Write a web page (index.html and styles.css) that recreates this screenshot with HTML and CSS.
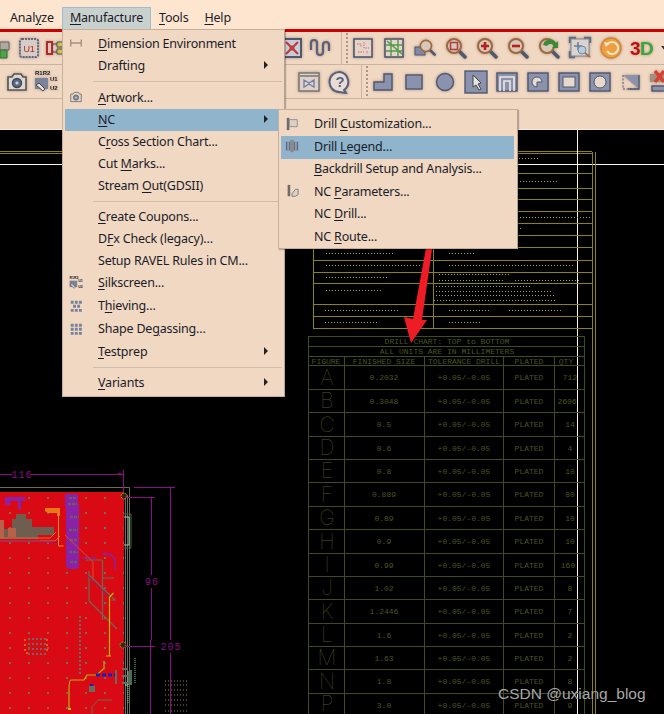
FILE: index.html
```html
<!DOCTYPE html>
<html lang="en">
  <head>
    <meta charset="UTF-8" />
    <title>Manufacture menu</title>
    <link rel="stylesheet" href="styles.css">
  </head>
  <body>
    <svg class="defs" width="0" height="0">
      <symbol id="lens" viewBox="0 0 24 24">
        <path d="M15 15l6 6" stroke="#50586e" stroke-width="3.5" stroke-linecap="round"/>
        <circle cx="10" cy="10" r="7" fill="#d8c8bc" stroke="#a0683c" stroke-width="2"/>
      </symbol>
      <symbol id="camera" viewBox="0 0 24 24">
        <path d="M3 7h4l2-3h7l2 3h3v13H3z" fill="#dcd8d4" stroke="#555" stroke-width="1.6"/>
        <circle cx="12" cy="13" r="4.5" fill="#5a6a8c" stroke="#444" stroke-width="1.4"/>
        <circle cx="12" cy="13" r="1.6" fill="#c8d0e0"/>
      </symbol>
      <symbol id="grid" viewBox="0 0 24 24">
        <path d="M3 3h5v5H3zM10 3h5v5h-5zM17 3h5v5h-5zM3 10h5v5H3zM10 10h5v5h-5zM17 10h5v5h-5zM3 17h5v5H3zM10 17h5v5h-5zM17 17h5v5h-5z" fill="#7a829c"/>
      </symbol>
    </svg>

    <div class="menubar">
      <span class="menubar-item">Anal<u>y</u>ze</span>
      <span class="menubar-item active"><u>M</u>anufacture</span>
      <span class="menubar-item"><u>T</u>ools</span>
      <span class="menubar-item"><u>H</u>elp</span>
    </div>

    <div class="toolbar toolbar-one">
      <div class="tool tool-cut">
        <svg viewBox="0 0 10 24"><path d="M0 6h9v8H0z" fill="#b0a89c" stroke="#666"/><path d="M0 14h7v8H0z" fill="#4fa24a" stroke="#3c6a3a"/></svg>
      </div>
      <div class="tool tool-tight">
        <svg viewBox="0 0 24 24"><rect x="3" y="3" width="18" height="18" rx="2" fill="#d8ccc4" stroke="#5e6684" stroke-width="2" stroke-dasharray="2 1"/><text x="12" y="15.5" class="icon-label red">U1</text></svg>
      </div>
      <div class="tool">
        <svg viewBox="0 0 24 24"><path d="M4 6h5v12H4z" fill="#d8c8bc" stroke="#b02a2a" stroke-width="2"/><path d="M14 6h6v5h-6zM14 13h6v5h-6z" fill="#d0c050" stroke="#555"/><path d="M9 8h5M9 16h5" stroke="#444"/></svg>
      </div>
      <div class="tool-gap-one"></div>
      <div class="tool tool-xbox">
        <svg viewBox="0 0 24 24"><rect x="3" y="3" width="18" height="18" fill="#c8ccd8" stroke="#50586e" stroke-width="2"/><path d="M6 6l12 12M18 6L6 18" stroke="#c04040" stroke-width="2.4"/><circle cx="12" cy="12" r="2.5" fill="#c04040"/></svg>
      </div>
      <div class="tool">
        <svg viewBox="0 0 24 24"><path d="M3 14V7a3 3 0 0 1 6 0v9a3 3 0 0 0 6 0V9a3 3 0 0 1 6 0v6" fill="none" stroke="#5a6078" stroke-width="2.2"/></svg>
      </div>
      <div class="tool-sep"></div>
      <div class="tool">
        <svg viewBox="0 0 24 24"><rect x="3" y="3" width="18" height="18" fill="#e6d4c8" stroke="#50586e" stroke-width="1.6"/><path d="M6 8h4v3M13 6v6h5M7 16h6M16 15v3" fill="none" stroke="#c07070" stroke-dasharray="1.5 1"/></svg>
      </div>
      <div class="tool">
        <svg viewBox="0 0 24 24"><rect x="3" y="3" width="18" height="18" fill="#e6d4c8" stroke="#50586e" stroke-width="1.6"/><path d="M4 9h16M4 15h16M9 4v16M16 4v16M5 5l15 13" stroke="#4f9a48" stroke-width="1.4"/></svg>
      </div>
      <div class="tool">
        <svg viewBox="0 0 24 24"><rect x="2" y="11" width="10" height="8" fill="#8088a6" stroke="#50586e"/><use href="#lens" x="5" y="2" width="19" height="19"/></svg>
      </div>
      <div class="tool">
        <svg viewBox="0 0 24 24"><use href="#lens"/><rect x="6.5" y="6.5" width="7" height="7" fill="none" stroke="#b04040" stroke-width="1.6"/></svg>
      </div>
      <div class="tool">
        <svg viewBox="0 0 24 24"><use href="#lens"/><path d="M10 6v8M6 10h8" stroke="#b82020" stroke-width="2.6"/></svg>
      </div>
      <div class="tool">
        <svg viewBox="0 0 24 24"><use href="#lens"/><path d="M6 10h8" stroke="#b82020" stroke-width="2.6"/></svg>
      </div>
      <div class="tool">
        <svg viewBox="0 0 24 24"><use href="#lens"/><path d="M6 9a7 7 0 0 1 13-2l2-2v7h-6l2-2a4 4 0 0 0-7 0z" fill="#3a8a38"/></svg>
      </div>
      <div class="tool">
        <svg viewBox="0 0 24 24"><path d="M2 7V2h6M16 2h6v5M2 15v6h5" fill="none" stroke="#5e6c84" stroke-width="2.4"/><rect x="3" y="3" width="18" height="17" fill="#dcd4cc" stroke="#7c8698" stroke-width="1"/><path d="M10 6v8M6 10h8" stroke="#6c7c94" stroke-width="1.6"/><circle cx="14" cy="14" r="4" fill="#b8ccdc" stroke="#6888a8"/><path d="M17 17l5 4" stroke="#b0703a" stroke-width="2"/></svg>
      </div>
      <div class="tool">
        <svg viewBox="0 0 24 24"><circle cx="12" cy="12" r="10" fill="#eea040" stroke="#d88430" stroke-width="1.4"/><path d="M8 9a6 6 0 1 1 0 6" fill="none" stroke="#fbe8c8" stroke-width="2"/><path d="M5 6l5 1-3 4z" fill="#fbe8c8"/></svg>
      </div>
      <div class="tool">
        <svg viewBox="0 0 24 24"><text x="0" y="19" class="icon-3d red-3d">3</text><text x="10" y="19" class="icon-3d green-3d">D</text></svg>
      </div>
      <div class="tool-more"></div>
    </div>

    <div class="toolbar toolbar-two">
      <div class="tool tool-camera">
        <svg viewBox="0 0 24 24"><use href="#camera"/></svg>
      </div>
      <div class="tool">
        <svg viewBox="0 0 24 24"><rect x="1" y="8" width="13" height="11" fill="#7a829c"/><path d="M2 15l7 6 2-2-6-6z" fill="#e8e0d8" stroke="#444"/><text x="1" y="5" class="icon-tiny">R1R2</text><text x="16" y="11" class="icon-tiny">U1</text><text x="16" y="20" class="icon-tiny">U2</text></svg>
      </div>
      <div class="tool-gap-two"></div>
      <div class="tool">
        <svg viewBox="0 0 24 24"><rect x="2" y="3" width="20" height="18" fill="#e0d0c6" stroke="#7a7a7a" stroke-width="1.6"/><path d="M2 6h20" stroke="#8c8c8c" stroke-width="2"/><path d="M7 10l5 3 5-3v7l-5-3-5 3z" fill="none" stroke="#7080a8" stroke-width="1.3"/></svg>
      </div>
      <div class="tool">
        <svg viewBox="0 0 24 24"><path d="M12 2a10 10 0 0 0-1 20l7 1-2-3a10 10 0 0 0-4-18z" fill="#e8ddd4" stroke="#58607a" stroke-width="2"/><text x="12" y="17" class="icon-help">?</text></svg>
      </div>
      <div class="tool-sep"></div>
      <div class="tool">
        <svg viewBox="0 0 24 24"><path d="M13 4h8v16H3v-8h10z" class="shape"/></svg>
      </div>
      <div class="tool">
        <svg viewBox="0 0 24 24"><rect x="4" y="5" width="16" height="14" class="shape"/></svg>
      </div>
      <div class="tool">
        <svg viewBox="0 0 24 24"><circle cx="12" cy="12" r="8.5" class="shape"/></svg>
      </div>
      <div class="tool pressed">
        <svg viewBox="0 0 24 24"><rect x="1" y="1" width="22" height="22" class="shape"/><path d="M9 5l8 8-3 1 3 5-2 1-3-5-3 2z" fill="#e8e4e0" stroke="#444"/></svg>
      </div>
      <div class="tool">
        <svg viewBox="0 0 24 24"><rect x="2" y="3" width="20" height="18" class="shape"/><path d="M5 21V7h14v14M9 21V11h6v10" fill="none" stroke="#f0e8e0" stroke-width="1.6"/></svg>
      </div>
      <div class="tool">
        <svg viewBox="0 0 24 24"><rect x="2" y="3" width="20" height="18" class="shape"/><path d="M11 17a5 5 0 1 1 5-5h-5z" fill="#e8dcd0" stroke="#50586e"/></svg>
      </div>
      <div class="tool">
        <svg viewBox="0 0 24 24"><rect x="2" y="3" width="20" height="18" class="shape"/><rect x="6" y="7" width="12" height="10" fill="#e8d8ca" stroke="#50586e"/></svg>
      </div>
      <div class="tool">
        <svg viewBox="0 0 24 24"><rect x="2" y="3" width="20" height="18" class="shape"/><circle cx="12" cy="12" r="6" fill="#e8d8ca" stroke="#50586e"/></svg>
      </div>
      <div class="tool">
        <svg viewBox="0 0 24 24"><path d="M4 5h16v14z" fill="#8a92ae"/><path d="M20 5v14H9" fill="none" stroke="#50586e" stroke-width="1.4"/><path d="M4 5v14h16" fill="none" stroke="#50586e" stroke-dasharray="2 1.5"/></svg>
      </div>
      <div class="tool tool-last">
        <svg viewBox="0 0 14 24"><path d="M0 4h14v8H0z" fill="#a09084"/><path d="M5 1l9 11M14 1L5 12" stroke="#d84030" stroke-width="3.4"/><rect x="2" y="16" width="14" height="5" class="shape"/></svg>
      </div>
    </div>

    <div class="strip"></div>

    <div class="canvas">
      <svg class="board" viewBox="0 130 664 584" width="664" height="584">
        <!-- outline lines -->
        <path d="M0 151.5H592M0 153.5H592" class="outline"/>
        <path d="M0 164.5H664" class="white"/>
        <path d="M577.5 130V714" class="white"/>
        <path d="M592.5 152V714M595.5 152V714" class="outline"/>

        <!-- notes block above the chart -->
        <path d="M313.5 153V328M433.5 153V328M313 173.5H592M313 188.5H592M313 199.5H592M313 211.5H592M313 223.5H592M313 235.5H592M313 247.5H592M313 260.5H592M313 272.5H592M313 283.5H592M313 304.5H592M313 316.5H592M313 328.5H592" class="outline"/>
        <path d="M519 158.5H540M520 181.5H558M520 217.5H590M520 228.5H522M326 253.5H395M449 253.5H474M326 265.5H420M449 265.5H574M439 274.5H510M326 277.5H387M439 280.5H505M515 280.5H580M326 290.5H383M436 286.5H530M436 291.5H552M436 295.5H555M434 300.5H557M325 310.5H399M449 310.5H490M509 310.5H562M325 322.5H379M449 322.5H482" class="note"/>

        <!-- drill chart -->
        <path d="M308.5 336.5H584.5V714M308.5 336V714M308 346.5H585M308 356.5H585M308 365.5H585M308 389.5H585M308 412.5H585M308 436.5H585M308 459.5H585M308 482.5H585M308 506.5H585M308 529.5H585M308 553.5H585M308 576.5H585M308 599.5H585M308 623.5H585M308 646.5H585M308 669.5H585M308 693.5H585M344.5 356V714M424.5 356V714M503.5 356V714M554.5 356V714" class="chart"/>
        <text x="447" y="344" class="chart-text">DRILL CHART: TOP to BOTTOM</text>
        <text x="447" y="354" class="chart-text">ALL UNITS ARE IN MILLIMETERS</text>
        <text x="326" y="363.500" class="chart-text">FIGURE</text>
        <text x="384" y="363.500" class="chart-text">FINISHED SIZE</text>
        <text x="464" y="363.500" class="chart-text">TOLERANCE DRILL</text>
        <text x="529" y="363.500" class="chart-text">PLATED</text>
        <text x="566" y="363.500" class="chart-text">QTY</text>

        <text x="327" y="385" class="figure">A</text><text x="384" y="380" class="chart-text">0.2032</text><text x="464" y="380" class="chart-text">+0.05/-0.05</text><text x="529" y="380" class="chart-text">PLATED</text><text x="570" y="380" class="chart-text">712</text>
        <text x="327" y="408" class="figure">B</text><text x="384" y="404" class="chart-text">0.3048</text><text x="464" y="404" class="chart-text">+0.05/-0.05</text><text x="529" y="404" class="chart-text">PLATED</text><text x="567" y="404" class="chart-text">2606</text>
        <text x="327" y="432" class="figure">C</text><text x="384" y="427" class="chart-text">0.5</text><text x="464" y="427" class="chart-text">+0.05/-0.05</text><text x="529" y="427" class="chart-text">PLATED</text><text x="570" y="427" class="chart-text">14</text>
        <text x="327" y="455" class="figure">D</text><text x="384" y="451" class="chart-text">0.6</text><text x="464" y="451" class="chart-text">+0.05/-0.05</text><text x="529" y="451" class="chart-text">PLATED</text><text x="570" y="451" class="chart-text">4</text>
        <text x="327" y="478" class="figure">E</text><text x="384" y="474" class="chart-text">0.8</text><text x="464" y="474" class="chart-text">+0.05/-0.05</text><text x="529" y="474" class="chart-text">PLATED</text><text x="570" y="474" class="chart-text">10</text>
        <text x="327" y="502" class="figure">F</text><text x="384" y="497" class="chart-text">0.889</text><text x="464" y="497" class="chart-text">+0.05/-0.05</text><text x="529" y="497" class="chart-text">PLATED</text><text x="570" y="497" class="chart-text">80</text>
        <text x="327" y="525" class="figure">G</text><text x="384" y="521" class="chart-text">0.89</text><text x="464" y="521" class="chart-text">+0.05/-0.05</text><text x="529" y="521" class="chart-text">PLATED</text><text x="570" y="521" class="chart-text">10</text>
        <text x="327" y="549" class="figure">H</text><text x="384" y="544" class="chart-text">0.9</text><text x="464" y="544" class="chart-text">+0.05/-0.05</text><text x="529" y="544" class="chart-text">PLATED</text><text x="570" y="544" class="chart-text">10</text>
        <text x="327" y="572" class="figure">I</text><text x="384" y="568" class="chart-text">0.99</text><text x="464" y="568" class="chart-text">+0.05/-0.05</text><text x="529" y="568" class="chart-text">PLATED</text><text x="568" y="568" class="chart-text">160</text>
        <text x="327" y="595" class="figure">J</text><text x="384" y="591" class="chart-text">1.02</text><text x="464" y="591" class="chart-text">+0.05/-0.05</text><text x="529" y="591" class="chart-text">PLATED</text><text x="570" y="591" class="chart-text">8</text>
        <text x="327" y="619" class="figure">K</text><text x="384" y="614" class="chart-text">1.2446</text><text x="464" y="614" class="chart-text">+0.05/-0.05</text><text x="529" y="614" class="chart-text">PLATED</text><text x="570" y="614" class="chart-text">7</text>
        <text x="327" y="642" class="figure">L</text><text x="384" y="638" class="chart-text">1.6</text><text x="464" y="638" class="chart-text">+0.05/-0.05</text><text x="529" y="638" class="chart-text">PLATED</text><text x="570" y="638" class="chart-text">2</text>
        <text x="327" y="665" class="figure">M</text><text x="384" y="661" class="chart-text">1.63</text><text x="464" y="661" class="chart-text">+0.05/-0.05</text><text x="529" y="661" class="chart-text">PLATED</text><text x="570" y="661" class="chart-text">2</text>
        <text x="327" y="689" class="figure">N</text><text x="384" y="684" class="chart-text">1.8</text><text x="464" y="684" class="chart-text">+0.05/-0.05</text><text x="529" y="684" class="chart-text">PLATED</text><text x="570" y="684" class="chart-text">8</text>
        <text x="327" y="711" class="figure">P</text><text x="384" y="708" class="chart-text">3.0</text><text x="464" y="708" class="chart-text">+0.05/-0.05</text><text x="529" y="708" class="chart-text">PLATED</text><text x="570" y="708" class="chart-text">9</text>

        <!-- board -->
        <defs>
          <pattern id="vias" width="19" height="15" patternUnits="userSpaceOnUse" x="9" y="497">
            <rect width="2" height="2" fill="#7c6a58"/>
          </pattern>
        </defs>
        <rect x="0" y="492" width="124" height="222" fill="#d90a14"/>
        <rect x="0" y="492" width="124" height="222" fill="url(#vias)"/>
        <path d="M0 661H124" stroke="#c81018"/>
        <path d="M0 487.5H129.5V714M125.5 495V714M127.5 495V714" fill="none" stroke="#706a58"/>
        <path d="M124 514h7v34h-7" fill="none" stroke="#5a5a40"/>
        <path d="M124 517h5v28h-5M128 671v14h-3M131 670v15" fill="none" stroke="#88d8b0"/>
        <path d="M135 658v26M128 684v20" fill="none" stroke="#70c8b0" stroke-dasharray="1 1"/>

        <path d="M12 519h4v-5h10v5h6v8h22v8H38v4H0v-10h12z" fill="#6e5e50"/>
        <path d="M0 520h4v18H0zM8 528h8v9H8z" fill="#b86048"/>
        <path d="M0 538H50l6-6M0 541H55l5-5" fill="none" stroke="#d86a30"/>
        <path d="M0 541H40M40 542H60" fill="none" stroke="#8b1a80"/>

        <path d="M5 497h20v4h-4v8h-3v-8H10v4H5z" fill="#8a22a8"/>
        <path d="M65 494h13v10h1v62c0 3-2 3-5 3h-4c-2 0-4-2-4-4V508l-1-2z" fill="#8a22a8"/>
        <path d="M69 498h7M68 504h9M70 517h9M69 530h9M70 540h8M69 552h9M70 562h8" stroke="#6e5a70" stroke-width="2.400" stroke-dasharray="3 1"/>
        <path d="M82 558h14M102 554h8l5 5v11" fill="none" stroke="#8a22a8" stroke-width="1.4"/>
        <path d="M45 508h15v8h-3v-3H48l-3-2z" fill="#e87818"/>
        <path d="M58.500 516v30h5" fill="none" stroke="#e89018"/>
        <path d="M65 535l28 27v18" fill="none" stroke="#e84820"/>
        <path d="M86 560h16M102.500 560v60M102 578h12M89 571v30l28 28M89 575l26 25h-4" fill="none" stroke="#6e6a52" stroke-width="1.2"/>
        <path d="M87 575l22 22" fill="none" stroke="#8b1a80"/>
        <path d="M109.500 656V597l4-4M106 656h5" fill="none" stroke="#c8b400" stroke-width="1.2"/>
        <path d="M69 690c0-2 0-10 2-10h13l3-5h10l6-6h1v-8M69 690v19" fill="none" stroke="#b8b010" stroke-width="1.2"/>
        <rect x="68" y="708" width="3" height="2" fill="#c8b400"/>
        <path d="M96 675h19" stroke="#1020c8" stroke-width="3" stroke-dasharray="4 2"/>
        <rect x="89" y="686" width="6" height="6" fill="#6a6a60"/>
        <rect x="90" y="684" width="3" height="2" fill="#1020c8"/>
        <path d="M116 670v14M122 669h6M122 676h6M122 683h6" stroke="#6a6a60" stroke-width="2"/>
        <path d="M80 616v60" stroke="#6a6a60" stroke-width="2" stroke-dasharray="2 2"/>
        <path d="M28 639H46M28 644H46M28 649H46M28 654H46" fill="none" stroke="#6a6a60" stroke-width="2" stroke-dasharray="2 2"/>
        <path d="M25 639v14h3M47 639v14" fill="none" stroke="#e87818" stroke-width="1.500" stroke-dasharray="2 3"/>
        <path d="M98 700h14M98 700l-6 7v7" fill="none" stroke="#6e6a52"/>
        <circle cx="124" cy="496" r="3" fill="#302818" stroke="#c89000" stroke-dasharray="2 1"/>
        <circle cx="123" cy="645" r="3" fill="#302818" stroke="#c89000" stroke-dasharray="2 1"/>

        <!-- dimensions -->
        <path d="M0 474.500H12M31 474.500H123M123.500 470V492M118 473l5 1.500M134 487.500H175M170.500 488V640M170.500 653V714M125 497.500H155M151.500 498V575M151.500 588V640M125 646.500H155M150.500 640V714" class="dim"/>
        <text x="22" y="478" class="dim-text">116</text>
        <text x="152" y="585" class="dim-text">96</text>
        <text x="171" y="650" class="dim-text">205</text>

        <!-- dot field by the board edge -->
        <path d="M165 681H187M165 685H187M165 690H188M165 695H188M165 700H188M165 705H188M165 711H188" class="field"/>

        <!-- red arrow -->
        <path d="M435 199L439 200L422 320L427 320L411 343L404 317L413 319Z" fill="#ee1c25"/>
      </svg>
    </div>

    <div class="menu">
      <div class="item"><span class="item-icon"><svg viewBox="0 0 16 16"><path d="M2 4v8M14 4v8M2 8h12" stroke="#b08c88" stroke-width="1.6"/></svg></span><span><u>D</u>imension Environment</span></div>
      <div class="item"><span class="item-icon"></span><span>Draftin<u>g</u></span><span class="arrow"></span></div>
      <div class="sep sep-first"></div>
      <div class="item"><span class="item-icon"><svg viewBox="0 0 24 24" class="dim-icon"><use href="#camera"/></svg></span><span><u>A</u>rtwork...</span></div>
      <div class="item selected"><span class="item-icon"></span><span><u>N</u>C</span><span class="arrow"></span></div>
      <div class="item"><span class="item-icon"></span><span>C<u>r</u>oss Section Chart...</span></div>
      <div class="item"><span class="item-icon"></span><span>Cut <u>M</u>arks...</span></div>
      <div class="item"><span class="item-icon"></span><span>Stream <u>O</u>ut(GDSII)</span></div>
      <div class="sep"></div>
      <div class="item"><span class="item-icon"></span><span><u>C</u>reate Coupons...</span></div>
      <div class="item"><span class="item-icon"></span><span>D<u>F</u>x Check (legacy)...</span></div>
      <div class="item"><span class="item-icon"></span><span>Setup RAVEL Rules in CM...</span></div>
      <div class="item tall"><span class="item-icon"><svg viewBox="0 0 24 24"><rect x="1" y="8" width="13" height="11" fill="#7a829c"/><path d="M2 15l7 6 2-2-6-6z" fill="#e8e0d8" stroke="#444"/><text x="1" y="5" class="icon-tiny">R1R2</text><text x="16" y="11" class="icon-tiny">U1</text><text x="16" y="20" class="icon-tiny">U2</text></svg></span><span><u>S</u>ilkscreen...</span></div>
      <div class="item tall"><span class="item-icon"><svg viewBox="0 0 24 24"><path d="M3 3h5v5H3zM10 3h5v5h-5zM17 3h5v5h-5zM7 10h5v5H7zM14 10h5v5h-5zM3 17h5v5H3zM10 17h5v5h-5zM17 17h5v5h-5z" fill="#7a829c"/></svg></span><span>T<u>h</u>ieving...</span></div>
      <div class="item tall"><span class="item-icon"><svg viewBox="0 0 24 24"><use href="#grid"/></svg></span><span>Shape De<u>g</u>assing...</span></div>
      <div class="item"><span class="item-icon"></span><span><u>T</u>estprep</span><span class="arrow"></span></div>
      <div class="sep"></div>
      <div class="item"><span class="item-icon"></span><span><u>V</u>ariants</span><span class="arrow"></span></div>
    </div>

    <div class="submenu">
      <div class="item"><span class="item-icon"><svg viewBox="0 0 16 16"><path d="M2 1h3v14H2z" fill="#6c6c68"/><path d="M5 3h9v8H5z" fill="#ddd0c4" stroke="#8c8c88"/></svg></span><span>Drill <u>C</u>ustomization...</span></div>
      <div class="item selected"><span class="item-icon"><svg viewBox="0 0 16 16"><path d="M1 3h5v10H1zM10 3h5v10h-5z" fill="#5c6c88"/><path d="M6 1h4v14H6z" fill="#8a8a88"/><path d="M3.500 3v10M12.500 3v10" stroke="#c8d0d8"/></svg></span><span>Drill <u>L</u>egend...</span></div>
      <div class="item"><span class="item-icon"></span><span><u>B</u>ackdrill Setup and Analysis...</span></div>
      <div class="item"><span class="item-icon"><svg viewBox="0 0 16 16"><path d="M3 1h3v13H3z" fill="#6c6c68"/><path d="M8 11l4-5h3v6l-3 2H8z" fill="#ddd0c4" stroke="#777"/></svg></span><span>NC <u>P</u>arameters...</span></div>
      <div class="item"><span class="item-icon"></span><span>NC <u>D</u>rill...</span></div>
      <div class="item"><span class="item-icon"></span><span>NC <u>R</u>oute...</span></div>
    </div>

    <div class="watermark">CSDN @uxiang_blog</div>
  </body>
</html>
```
FILE: styles.css
```css
body {
  margin: 0;
  width: 664px;
  height: 714px;
  overflow: hidden;
  position: relative;
  background-color: #000;
  font-family: "Noto Sans", "Open Sans", sans-serif;
  font-size: 12.500px;
  letter-spacing: -0.2px;
  color: #1c1c28;
}
.defs {
  position: absolute;
}
u {
  text-underline-offset: 2px;
}

/* menu bar */
.menubar {
  height: 29px;
  box-sizing: border-box;
  padding: 7px 0 0 0;
  display: flex;
  background-color: #fde5d0;
}
.menubar-item {
  height: 22px;
  line-height: 21px;
  box-sizing: border-box;
  padding: 0 8px;
}
.menubar-item:first-child {
  padding: 0 8px 0 10px;
}
.menubar-item.active {
  background-color: #c9d1cf;
  border: 1px solid #9dbdd0;
  border-bottom: 0;
  line-height: 20px;
  padding: 0 7px;
}

/* toolbars */
.toolbar {
  display: flex;
  align-items: center;
  background-color: #f0d8c3;
  border-bottom: 1px solid #c9b3a1;
  box-sizing: border-box;
  overflow: hidden;
}
.toolbar-one {
  height: 36px;
  border-top: 3px solid #d00000;
}
.toolbar-two {
  height: 34px;
  padding-left: 5px;
}
.tool {
  width: 24px;
  height: 24px;
  flex: none;
  margin-right: 7px;
  filter: drop-shadow(0 0 1.5px #a89080);
}
.tool svg {
  display: block;
  width: 100%;
  height: 24px;
}
.tool.pressed {
  filter: none;
}
.tool-cut {
  width: 10px;
}
.tool-camera {
  margin-right: 5px;
}
.tool-tight {
  margin-right: 2px;
}
.tool-xbox {
  margin-right: 4px;
}
.tool-last {
  width: 14px;
  margin-right: 0;
}
.tool-gap-one {
  width: 206px;
  flex: none;
}
.tool-gap-two {
  width: 232px;
  flex: none;
}
.tool-sep {
  flex: none;
  align-self: stretch;
  width: 9px;
  margin: 0 0 0 2px;
  border-left: 1px solid #c9b3a1;
  background-image: radial-gradient(circle, #a89888 1px, transparent 1px);
  background-size: 4px 4px;
  background-repeat: repeat-y;
  background-position: 3px 4px;
}
.tool-more {
  width: 0;
  height: 0;
  border-left: 4px solid transparent;
  border-top: 5px solid #333;
}
.strip {
  height: 31px;
  box-sizing: border-box;
  background-color: #f0d8c3;
  border-bottom: 1px solid #fbeadb;
}
.shape {
  fill: #8a92ae;
  stroke: #50586e;
  stroke-width: 1.4;
}

/* icon text */
.icon-label {
  font-family: "Liberation Sans", sans-serif;
  font-size: 9px;
  text-anchor: middle;
}
.red {
  fill: #b02a2a;
}
.icon-tiny {
  font-family: "Liberation Sans", sans-serif;
  font-size: 6px;
  font-weight: bold;
  letter-spacing: 0;
  fill: #222;
}
.icon-3d {
  font-family: "Liberation Sans", sans-serif;
  font-size: 19px;
  font-weight: bold;
  letter-spacing: 0;
}
.red-3d {
  fill: #c40a0a;
}
.green-3d {
  fill: #38a838;
}
.icon-help {
  font-family: "Liberation Sans", sans-serif;
  font-size: 15px;
  font-weight: bold;
  text-anchor: middle;
  fill: #58607a;
}

/* cad canvas */
.canvas {
  height: 584px;
  overflow: hidden;
}
.board {
  display: block;
}
.outline {
  fill: none;
  stroke: #8c8410;
}
.white {
  stroke: #fff4e8;
}
.note {
  fill: none;
  stroke: #a8a838;
  stroke-dasharray: 1 2;
}
.chart {
  fill: none;
  stroke: #414c1c;
}
.chart-text {
  font-family: "Liberation Mono", monospace;
  font-size: 8px;
  letter-spacing: 0;
  text-anchor: middle;
  fill: #4a5622;
}
.figure {
  font-family: "Inter", "Liberation Sans", sans-serif;
  font-size: 21px;
  font-weight: 100;
  letter-spacing: 0;
  text-anchor: middle;
  fill: #4f5c24;
}
.dim {
  fill: none;
  stroke: #8b0f80;
}
.dim-text {
  font-family: "Liberation Mono", monospace;
  font-size: 10px;
  letter-spacing: 1px;
  text-anchor: middle;
  fill: #8b0f80;
}
.field {
  fill: none;
  stroke: #8c8c28;
  stroke-dasharray: 1 2;
}

/* menus */
.menu,
.submenu {
  position: absolute;
  box-sizing: border-box;
  background-color: #f0d8c3;
  border: 1px solid #c4ae9c;
  border-right-color: #b8a292;
  box-shadow: 1px 1px 1px rgba(0, 0, 0, 0.25);
}
.menu {
  left: 62px;
  top: 29px;
  width: 223px;
  height: 368px;
  padding: 3px 1px 0 2px;
}
.submenu {
  left: 278px;
  top: 109px;
  width: 240px;
  height: 140px;
  padding: 3.5px 3px 0 2px;
}
.item {
  display: flex;
  align-items: center;
  height: 22px;
  box-sizing: border-box;
  padding-bottom: 2px;
}
.item.tall {
  height: 23px;
}
.submenu .item {
  height: 22.500px;
}
.item.selected {
  background-color: #8fb4cb;
}
.item-icon {
  width: 33px;
  flex: none;
  display: flex;
  align-items: center;
  padding-left: 4px;
  box-sizing: border-box;
}
.item-icon svg {
  width: 14px;
  height: 14px;
}
.dim-icon {
  opacity: 0.75;
}
.arrow {
  margin-left: auto;
  margin-right: 15px;
  width: 0;
  height: 0;
  border-top: 4px solid transparent;
  border-bottom: 4px solid transparent;
  border-left: 4px solid #222;
}
.sep {
  height: 1px;
  margin: 4px 1px 4px 28px;
  background-color: #d2bcaa;
}
.sep-first {
  margin: 4px 1px 5px 28px;
}
.watermark {
  position: absolute;
  left: 498px;
  top: 684px;
  font-family: "Liberation Sans", sans-serif;
  font-size: 15.500px;
  letter-spacing: 0;
  line-height: 20px;
  color: #a8a8a8;
  text-shadow: 0 0 1px rgba(0, 0, 0, 0.6);
}
```
